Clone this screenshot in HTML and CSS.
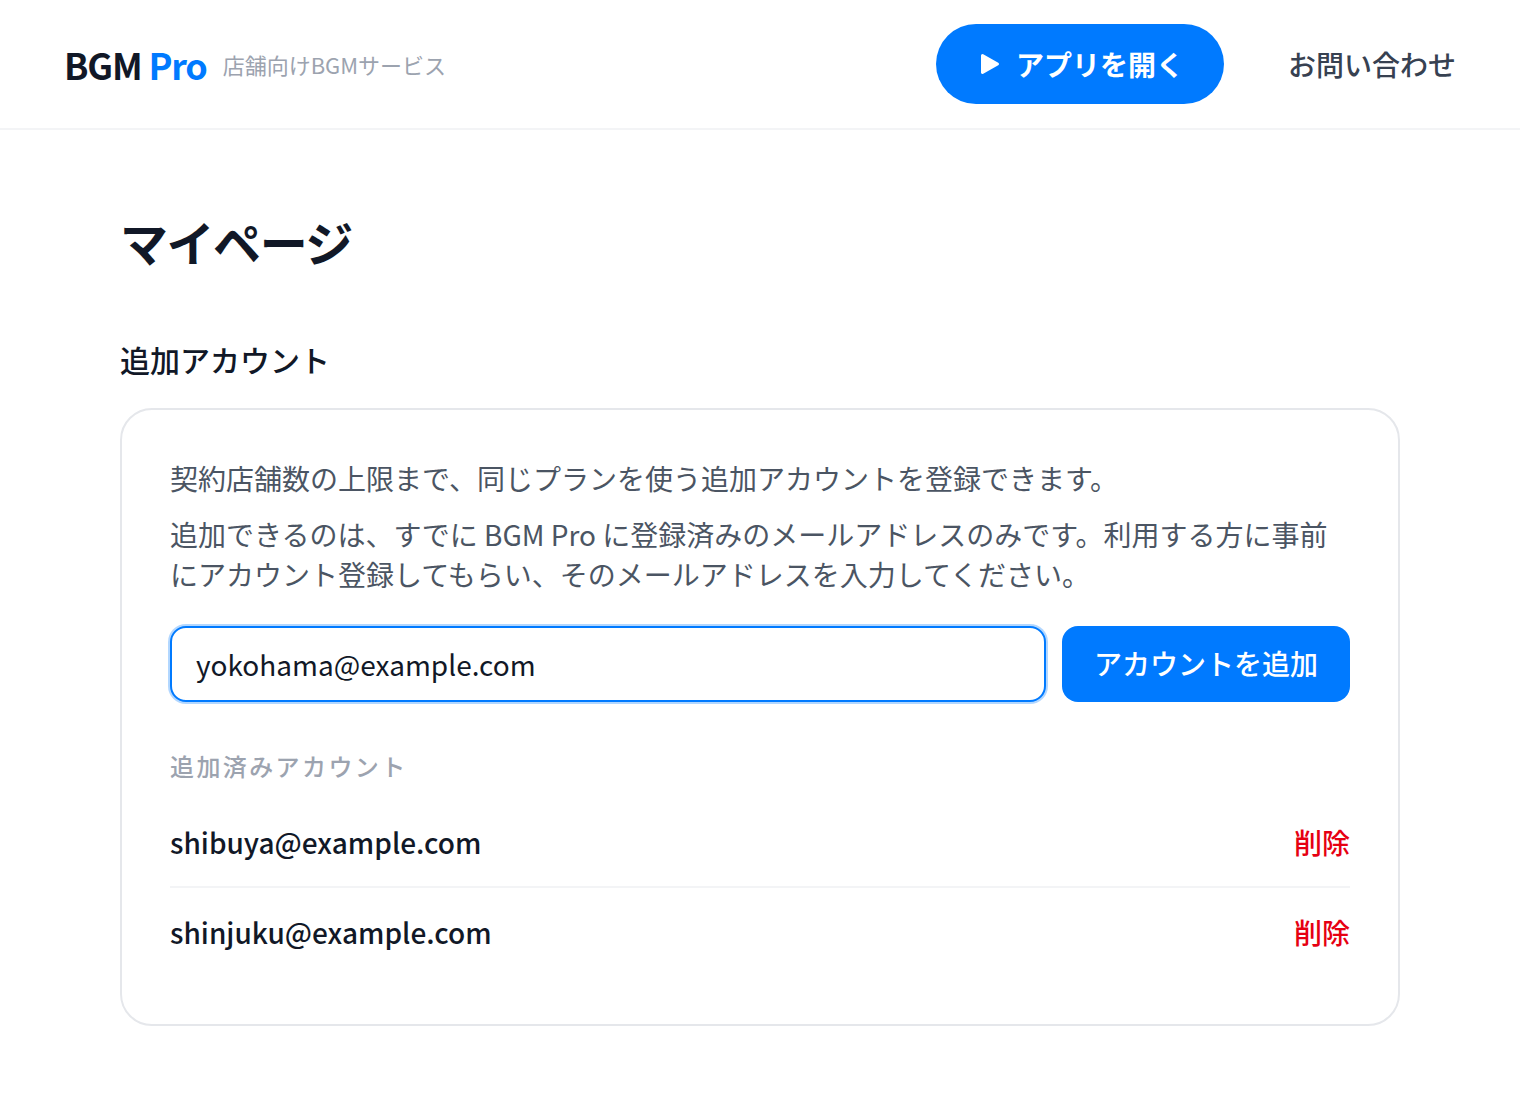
FILE: index.html
```html
<!DOCTYPE html>
<html lang="ja">
<head>
<meta charset="utf-8">
<title>マイページ</title>
<link rel="stylesheet" href="styles.css">
</head>
<body>
<header class="header">
  <div class="brand">
    <span class="logo">BGM <span class="logo-accent">Pro</span></span>
    <span class="tagline">店舗向けBGMサービス</span>
  </div>
  <nav class="nav">
    <a class="open-app" href="#">
      <svg class="play" viewBox="0 0 24 24" aria-hidden="true"><polygon points="6.500,3.500 21.500,12 6.500,20.500"/></svg>
      <span>アプリを開く</span>
    </a>
    <a class="contact" href="#">お問い合わせ</a>
  </nav>
</header>
<main class="main">
  <h1 class="title">マイページ</h1>
  <h2 class="section-title">追加アカウント</h2>
  <section class="card">
    <p class="desc">契約店舗数の上限まで、同じプランを使う追加アカウントを登録できます。</p>
    <p class="desc desc-second">追加できるのは、すでに BGM Pro に登録済みのメールアドレスのみです。利用する方に事前にアカウント登録してもらい、そのメールアドレスを入力してください。</p>
    <form class="add-form">
      <input class="email-input" type="email" value="yokohama@example.com">
      <button class="add-button" type="button">アカウントを追加</button>
    </form>
    <h3 class="list-label">追加済みアカウント</h3>
    <ul class="account-list">
      <li class="account"><span>shibuya@example.com</span><a class="delete" href="#">削除</a></li>
      <li class="account"><span>shinjuku@example.com</span><a class="delete" href="#">削除</a></li>
    </ul>
  </section>
</main>
</body>
</html>
```
FILE: styles.css
```css
* { box-sizing: border-box; }
html, body { margin: 0; padding: 0; }
body {
  background: #fff;
  color: #111827;
  font-family: "Noto Sans CJK JP", "Noto Sans", sans-serif;
  min-height: 1098px;
}
a { text-decoration: none; color: inherit; }
.header {
  display: flex;
  align-items: center;
  justify-content: space-between;
  height: 130px;
  padding: 0 64px;
  border-bottom: 2px solid #f3f4f6;
}
.brand { display: flex; align-items: center; gap: 16px; }
.logo { font-size: 36px; font-weight: 700; line-height: 1.5; letter-spacing: -1.2px; color: #111827; }
.logo-accent { color: #007aff; }
.tagline { font-size: 22px; color: #9ca3af; line-height: 1.5; }
.nav { display: flex; align-items: center; gap: 64px; }
.open-app {
  display: flex;
  align-items: center;
  gap: 16px;
  height: 80px;
  padding: 0 40px;
  border-radius: 40px;
  background: #007aff;
  color: #fff;
  font-size: 28px;
  font-weight: 700;
}
.play {
  width: 24px;
  height: 24px;
  fill: #fff;
  stroke: #fff;
  stroke-width: 3;
  stroke-linejoin: round;
}
.contact { font-size: 28px; font-weight: 500; color: #374151; }
.main { width: 1280px; margin: 0 auto; padding-top: 80px; }
.title {
  margin: 0;
  font-size: 48px;
  line-height: 62px;
  font-weight: 700;
  letter-spacing: -1.44px;
  color: #111827;
}
.section-title {
  margin: 66px 0 0;
  font-size: 30px;
  line-height: 42px;
  font-weight: 500;
  color: #111827;
}
.card {
  margin-top: 28px;
  border: 2px solid #e5e7eb;
  border-radius: 32px;
  padding: 48px;
  height: 618px;
}
.desc {
  margin: 0;
  font-size: 28px;
  line-height: 40px;
  color: #4b5563;
}
.desc-second { margin-top: 16px; }
.add-form { display: flex; gap: 16px; margin-top: 32px; }
.email-input {
  flex: 1;
  min-width: 0;
  height: 76px;
  padding: 0 24px;
  border: 2px solid #007aff;
  border-radius: 16px;
  box-shadow: 0 0 0 2px rgba(0, 122, 255, 0.3);
  outline: none;
  font: inherit;
  font-size: 28px;
  color: #111827;
}
.add-button {
  width: 288px;
  height: 76px;
  padding: 0 0 2px;
  border: 0;
  border-radius: 16px;
  background: #007aff;
  color: #fff;
  font: inherit;
  font-size: 28px;
  font-weight: 500;
}
.list-label {
  margin: 46px 0 0;
  font-size: 24px;
  line-height: 36px;
  font-weight: 500;
  letter-spacing: 2.4px;
  color: #9ca3af;
}
.account-list { list-style: none; margin: 14px 0 0; padding: 0; }
.account {
  display: flex;
  align-items: center;
  justify-content: space-between;
  padding: 24px 0;
  line-height: 40px;
  font-size: 28px;
  font-weight: 500;
  color: #111827;
}
.account:not(:last-child) { border-bottom: 2px solid #f3f4f6; }
.delete { font-size: 28px; font-weight: 500; color: #e60012; }
```
